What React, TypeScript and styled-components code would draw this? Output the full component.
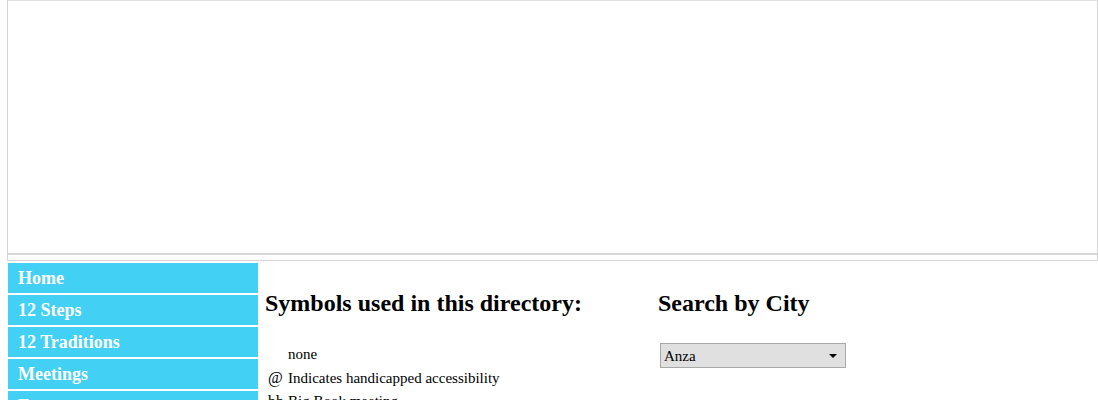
import styled, { createGlobalStyle } from 'styled-components'

const GlobalStyle = createGlobalStyle`
  body {
    margin: 0;
    background: #fff;
    font-family: 'Liberation Serif', 'Times New Roman', serif;
    color: #000;
  }
`

const navItems = ['Home', '12 Steps', '12 Traditions', 'Meetings', 'Events']

const symbols = [
  { mark: '', text: 'none' },
  { mark: '@', text: 'Indicates handicapped accessibility' },
  { mark: 'bb', text: 'Big Book meeting' },
  { mark: 'c', text: 'Closed meeting' },
]

const App = () => {
  return (
    <Page>
      <GlobalStyle />
      <Banner>
        <BannerArea />
      </Banner>
      <Layout>
        <Nav>
          {navItems.map((item) => (
            <NavLink key={item} href='#'>
              {item}
            </NavLink>
          ))}
        </Nav>
        <Main>
          <Column>
            <Heading>Symbols used in this directory:</Heading>
            <SymbolTable>
              <tbody>
                {symbols.map((s) => (
                  <tr key={s.text}>
                    <Mark>{s.mark}</Mark>
                    <Desc>{s.text}</Desc>
                  </tr>
                ))}
              </tbody>
            </SymbolTable>
          </Column>
          <Column>
            <Heading>Search by City</Heading>
            <SelectWrap>
              <CitySelect defaultValue='Anza'>
                <option>Anza</option>
                <option>Banning</option>
                <option>Beaumont</option>
                <option>Hemet</option>
              </CitySelect>
            </SelectWrap>
          </Column>
        </Main>
      </Layout>
    </Page>
  )
}

export default App

const Page = styled.div`
  padding-left: 7px;
  width: 1091px;
`

const Banner = styled.div`
  border: 1px solid #d6d6d6;
  border-top-color: #e2e2e2;
  height: 261px;
  box-sizing: border-box;
`

const BannerArea = styled.div`
  height: 252px;
  border-bottom: 2px solid #d6d6d6;
`

const Layout = styled.div`
  display: flex;
  align-items: flex-start;
  margin-top: 2px;
  padding-left: 1px;
`

const Nav = styled.nav`
  width: 250px;
  flex-shrink: 0;
  display: flex;
  flex-direction: column;
  gap: 2px;
`

const NavLink = styled.a`
  display: block;
  height: 30px;
  line-height: 30px;
  padding-left: 10px;
  background: #43d0f5;
  color: #fff;
  font-size: 18px;
  font-weight: bold;
  text-decoration: none;
`

const Main = styled.div`
  display: flex;
  padding-left: 7px;
  padding-top: 27px;
`

const Column = styled.div`
  width: 393px;
`

const Heading = styled.h2`
  margin: 0 0 26px;
  font-size: 24px;
  font-weight: bold;
`

const SymbolTable = styled.table`
  border-collapse: collapse;
  font-size: 15px;
`

const Mark = styled.td`
  width: 20px;
  padding: 0 0 0 3px;
  height: 23.5px;
  font-size: 16px;
`

const Desc = styled.td`
  padding: 0;
`

const SelectWrap = styled.div`
  position: relative;
  display: inline-block;
  margin-left: 2px;

  &::after {
    content: '';
    position: absolute;
    right: 9px;
    top: 11px;
    border-left: 4px solid transparent;
    border-right: 4px solid transparent;
    border-top: 4px solid #000;
    pointer-events: none;
  }
`

const CitySelect = styled.select`
  appearance: none;
  display: block;
  width: 186px;
  height: 25px;
  padding: 0 0 0 3px;
  background: #e0e0e0;
  border: 1px solid #a8a8a8;
  border-radius: 0;
  font-family: 'Liberation Serif', 'Times New Roman', serif;
  font-size: 15px;
  color: #000;
`
